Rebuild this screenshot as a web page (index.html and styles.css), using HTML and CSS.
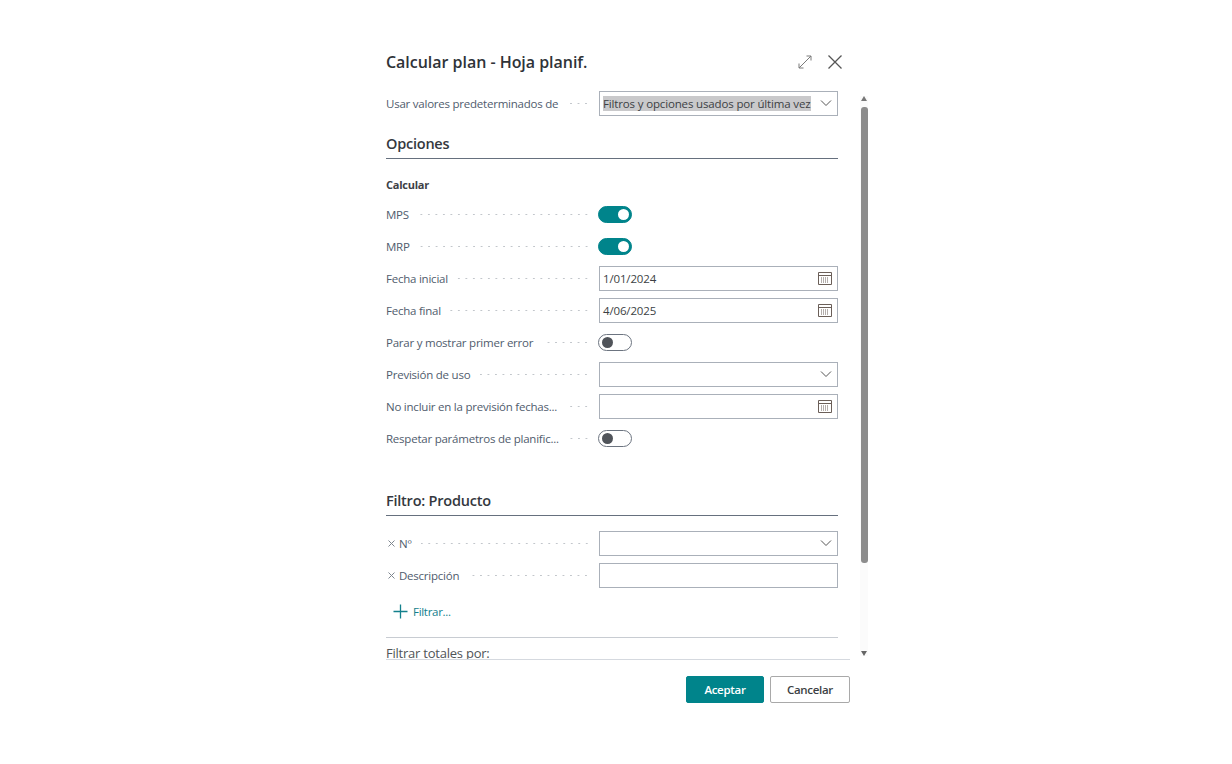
FILE: index.html
```html
<!DOCTYPE html>
<html lang="es">
<head>
    <meta charset="UTF-8">
    <title>Calcular plan - Hoja planif.</title>
    <link rel="stylesheet" href="styles.css">
</head>
<body>
    <div class="dialog">
        <!-- Cabecera -->
        <div class="dialog-header">
            <div class="dialog-title">Calcular plan - Hoja planif.</div>
            <div class="header-icons">
                <svg width="14" height="14" viewBox="0 0 14 14" fill="none" stroke="#7a7a7a" stroke-width="1"><path d="M1 13 13 1M8.5 1H13v4.5M1 8.5V13h4.5"/></svg>
                <svg width="16" height="16" viewBox="0 0 16 16" fill="none" stroke="#555" stroke-width="1.3"><path d="M1.5 1.5 14.5 14.5M14.5 1.5 1.5 14.5"/></svg>
            </div>
        </div>

        <div class="dialog-body">
            <div class="scroll-pane">
                <div class="row">
                    <div class="label"><span>Usar valores predeterminados de</span><i class="dots"></i></div>
                    <div class="field">
                        <span class="value selected">Filtros y opciones usados por última vez</span>
                        <svg width="12" height="12" viewBox="0 0 12 12" fill="none" stroke="#555"><path d="M1 3.5 6 8.5 11 3.5"/></svg>
                    </div>
                </div>

                <div class="section-title first">Opciones</div>
                <div class="group-title">Calcular</div>

                <div class="row">
                    <div class="label"><span>MPS</span><i class="dots"></i></div>
                    <div class="toggle on"><b></b></div>
                </div>
                <div class="row">
                    <div class="label"><span>MRP</span><i class="dots"></i></div>
                    <div class="toggle on"><b></b></div>
                </div>
                <div class="row">
                    <div class="label"><span>Fecha inicial</span><i class="dots"></i></div>
                    <div class="field">
                        <span class="value">1/01/2024</span>
                        <svg width="14" height="14" viewBox="0 0 14 14" fill="none" stroke="#6b5f58"><path d="M.5 1.5h13v12H.5zM.5 4.5h13"/><path stroke-dasharray="1 1" d="M3 7h8M3 9h8M3 11h8"/></svg>
                    </div>
                </div>
                <div class="row">
                    <div class="label"><span>Fecha final</span><i class="dots"></i></div>
                    <div class="field">
                        <span class="value">4/06/2025</span>
                        <svg width="14" height="14" viewBox="0 0 14 14" fill="none" stroke="#6b5f58"><path d="M.5 1.5h13v12H.5zM.5 4.5h13"/><path stroke-dasharray="1 1" d="M3 7h8M3 9h8M3 11h8"/></svg>
                    </div>
                </div>
                <div class="row">
                    <div class="label"><span>Parar y mostrar primer error</span><i class="dots"></i></div>
                    <div class="toggle"><b></b></div>
                </div>
                <div class="row">
                    <div class="label"><span>Previsión de uso</span><i class="dots"></i></div>
                    <div class="field">
                        <span class="value"></span>
                        <svg width="12" height="12" viewBox="0 0 12 12" fill="none" stroke="#555"><path d="M1 3.5 6 8.5 11 3.5"/></svg>
                    </div>
                </div>
                <div class="row">
                    <div class="label"><span>No incluir en la previsión fechas...</span><i class="dots"></i></div>
                    <div class="field">
                        <span class="value"></span>
                        <svg width="14" height="14" viewBox="0 0 14 14" fill="none" stroke="#6b5f58"><path d="M.5 1.5h13v12H.5zM.5 4.5h13"/><path stroke-dasharray="1 1" d="M3 7h8M3 9h8M3 11h8"/></svg>
                    </div>
                </div>
                <div class="row">
                    <div class="label"><span>Respetar parámetros de planific...</span><i class="dots"></i></div>
                    <div class="toggle"><b></b></div>
                </div>

                <div class="section-title second">Filtro: Producto</div>

                <div class="row filter-first">
                    <div class="label">
                        <svg class="remove" width="7" height="7" viewBox="0 0 7 7" fill="none" stroke="#7f8790"><path d="M.5 .5 6.5 6.5M6.5 .5 .5 6.5"/></svg>
                        <span>Nº</span><i class="dots"></i>
                    </div>
                    <div class="field">
                        <span class="value"></span>
                        <svg width="12" height="12" viewBox="0 0 12 12" fill="none" stroke="#555"><path d="M1 3.5 6 8.5 11 3.5"/></svg>
                    </div>
                </div>
                <div class="row">
                    <div class="label">
                        <svg class="remove" width="7" height="7" viewBox="0 0 7 7" fill="none" stroke="#7f8790"><path d="M.5 .5 6.5 6.5M6.5 .5 .5 6.5"/></svg>
                        <span>Descripción</span><i class="dots"></i>
                    </div>
                    <div class="field"><span class="value"></span></div>
                </div>

                <div class="add-filter">
                    <svg width="15" height="15" viewBox="0 0 15 15" fill="none" stroke="#13808c" stroke-width="1.3"><path d="M7.5 .5v14M.5 7.5h14"/></svg>
                    <span>Filtrar...</span>
                </div>

                <div class="totals">Filtrar totales por:</div>
            </div>

            <!-- Barra de desplazamiento -->
            <div class="scrollbar">
                <div class="arrow up"></div>
                <div class="track"><div class="thumb"></div></div>
                <div class="arrow down"></div>
            </div>
        </div>

        <div class="dialog-footer">
            <button class="btn primary">Aceptar</button>
            <button class="btn">Cancelar</button>
        </div>
    </div>
</body>
</html>
```

FILE: styles.css
```css
* {
    margin: 0;
    padding: 0;
    box-sizing: border-box;
}

body {
    font-family: "Open Sans", "Noto Sans", Arial, sans-serif;
    font-size: 11.5px;
    letter-spacing: -0.23px;
    background-color: #fff;
    color: #505c6d;
    height: 764px;
    display: flex;
    justify-content: center;
    overflow: hidden;
}

.dialog {
    width: 512px;
    padding: 50px 0 0 26px;
}

/* Cabecera */
.dialog-header {
    display: flex;
    justify-content: space-between;
    align-items: center;
    height: 24px;
    width: 457px;
}

.dialog-title {
    font-size: 16px;
    font-weight: 600;
    letter-spacing: -0.03px;
    color: #2f3338;
}

.header-icons {
    display: flex;
    gap: 15px;
    align-items: center;
}

/* Cuerpo */
.dialog-body {
    display: flex;
    margin-top: 15px;
}

.scroll-pane {
    width: 464px;
    height: 571px;
    overflow: hidden;
    border-bottom: 1px solid #d5d9df;
}

.row {
    display: flex;
    align-items: center;
    gap: 9px;
    width: 452px;
    height: 32px;
    padding-bottom: 4px;
}

.label {
    display: flex;
    align-items: center;
    width: 204px;
    flex-shrink: 0;
    white-space: nowrap;
}

.remove {
    margin: 0 4px 0 2px;
}

.dots {
    flex: 1;
    height: 3px;
    margin-left: 9px;
    background-image: radial-gradient(circle, #c2c6cb 0.8px, transparent 1px);
    background-size: 7.5px 3px;
    background-position: right;
}

.field {
    display: flex;
    align-items: center;
    justify-content: space-between;
    width: 239px;
    height: 25px;
    padding: 0 5px 0 3px;
    border: 1px solid #aab0b9;
    background: #fff;
    color: #3c3f44;
    letter-spacing: -0.15px;
}

.value.selected {
    background: #c9c9cb;
}

.toggle {
    display: flex;
    align-items: center;
    width: 34px;
    height: 17px;
    padding: 0 3px;
    border: 1px solid #6c7480;
    border-radius: 9px;
    margin: 1px 0 0 -1px;
}

.toggle b {
    width: 11px;
    height: 11px;
    border-radius: 50%;
    background: #50545a;
}

.toggle.on {
    justify-content: flex-end;
    padding: 0 2px;
    background: #00848b;
    border-color: #00848b;
}

.toggle.on b {
    background: #fff;
}

/* Secciones */
.section-title {
    width: 452px;
    height: 28px;
    font-size: 14.5px;
    font-weight: 600;
    color: #34383e;
    border-bottom: 1px solid #66707e;
    line-height: 25px;
}

.section-title.first {
    margin-top: 10px;
}

.section-title.second {
    margin-top: 32px;
}

.group-title {
    margin: 17px 0 6px;
    height: 18px;
    line-height: 18px;
    font-weight: 700;
    font-size: 11px;
    color: #3c4046;
}

.filter-first {
    margin-top: 13px;
}

.add-filter {
    display: flex;
    align-items: center;
    gap: 5px;
    height: 20px;
    margin: 8px 0 0 7px;
    color: #13808c;
    letter-spacing: -0.3px;
}

.totals {
    width: 452px;
    margin-top: 16px;
    padding-top: 6px;
    border-top: 1px solid #c8ccd2;
    font-size: 13px;
    line-height: 18px;
    color: #505458;
}

/* Barra de desplazamiento */
.scrollbar {
    display: flex;
    flex-direction: column;
    align-items: center;
    width: 8px;
    height: 560px;
    margin: 7px 0 0 10px;
    background: #fbfbfb;
}

.track {
    flex: 1;
    width: 100%;
    padding: 6px 0 88px 1px;
    display: flex;
}

.thumb {
    flex: 1;
    background: #8c8c8c;
    border-radius: 3px;
}

.arrow {
    width: 0;
    height: 0;
    border-left: 3.5px solid transparent;
    border-right: 3.5px solid transparent;
}

.arrow.up {
    border-bottom: 5px solid #777;
}

.arrow.down {
    border-top: 5px solid #666;
}

/* Botones */
.dialog-footer {
    display: flex;
    justify-content: flex-end;
    gap: 6px;
    width: 464px;
    margin-top: 16px;
}

.btn {
    width: 80px;
    height: 27px;
    font-family: inherit;
    font-size: 11.5px;
    font-weight: 600;
    letter-spacing: -0.3px;
    color: #3c3f44;
    background: #fff;
    border: 1px solid #a9a9a9;
    border-radius: 2px;
}

.btn.primary {
    width: 78px;
    color: #fff;
    background: #00848b;
    border-color: #00848b;
}
```
